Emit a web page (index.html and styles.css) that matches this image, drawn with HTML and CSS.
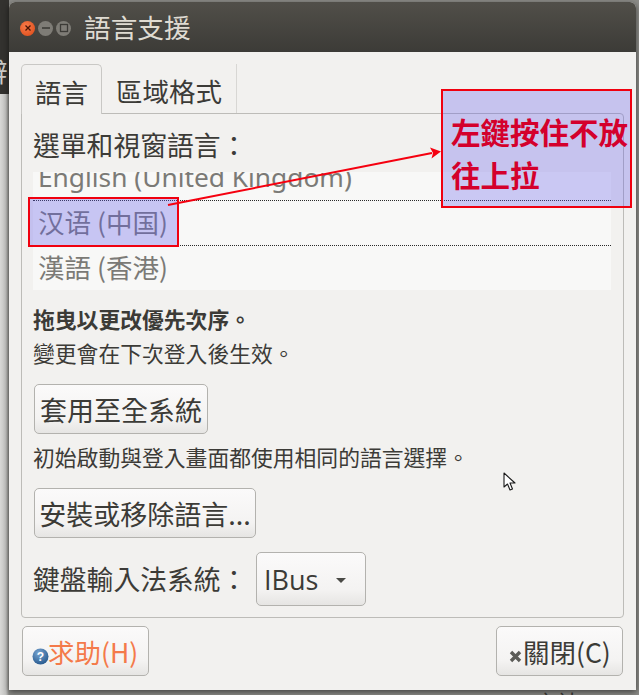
FILE: index.html
```html
<!DOCTYPE html>
<html lang="zh-Hant">
<head>
<meta charset="utf-8">
<title>語言支援</title>
<link rel="stylesheet" href="styles.css">
</head>
<body>
<div class="screen">
  <div class="backdrop-top"></div>
  <div class="backdrop-glyph">辭</div>
  <div class="backdrop-foot">言社</div>
  <div class="window">
    <header class="titlebar">
      <div class="controls">
        <span class="ctl ctl-close"><svg width="8" height="8" viewBox="0 0 8 8"><path d="M1.500 1.500l5 5M6.500 1.500l-5 5" stroke="#4a1505" stroke-width="1.300"/></svg></span>
        <span class="ctl ctl-min"><svg width="10" height="4" viewBox="0 0 10 4"><path d="M1 2h8" stroke="#3c3b37" stroke-width="1.600"/></svg></span>
        <span class="ctl ctl-max"><svg width="10" height="10" viewBox="0 0 10 10"><rect x="1.500" y="1.500" width="7" height="7" fill="none" stroke="#3c3b37" stroke-width="1.300"/></svg></span>
      </div>
      <h1 class="title">語言支援</h1>
    </header>
    <div class="content">
      <div class="tabs">
        <div class="tab tab-active">語言</div>
        <div class="tab">區域格式</div>
      </div>
      <section class="panel">
        <div class="label-main">選單和視窗語言：</div>
        <div class="langlist">
          <div class="lang lang-first"><span class="lang-clip">English (United Kingdom)</span></div>
          <div class="lang">汉语 (中国)</div>
          <div class="lang lang-last">漢語 (香港)</div>
        </div>
        <p class="hint-bold">拖曳以更改優先次序。</p>
        <p class="hint">變更會在下次登入後生效。</p>
        <button class="btn btn-apply">套用至全系統</button>
        <p class="hint hint-login">初始啟動與登入畫面都使用相同的語言選擇。</p>
        <button class="btn btn-install">安裝或移除語言...</button>
        <div class="imerow">
          <span class="label-ime">鍵盤輸入法系統：</span>
          <button class="btn btn-combo">IBus<svg class="caret" width="10" height="5" viewBox="0 0 10 5"><path d="M0 0h10L5 5z" fill="#4a4a46"/></svg></button>
        </div>
      </section>
      <footer class="actions">
        <button class="btn btn-foot btn-help"><svg class="ico-help" width="17" height="17" viewBox="0 0 17 17"><defs><radialGradient id="hg" cx="0.4" cy="0.3" r="0.8"><stop offset="0" stop-color="#7aa6d2"/><stop offset="1" stop-color="#1f5288"/></radialGradient></defs><circle cx="8.500" cy="8.500" r="8" fill="url(#hg)"/><text x="8.500" y="13" text-anchor="middle" class="ico-q">?</text></svg><span>求助(H)</span></button>
        <button class="btn btn-foot btn-close"><svg class="ico-x" width="13" height="13" viewBox="0 0 13 13"><path d="M2 2l9 9M11 2l-9 9" stroke="#5c5c58" stroke-width="3.400"/></svg><span>關閉(C)</span></button>
      </footer>
    </div>
  </div>
  <div class="mark mark-row"></div>
  <div class="mark mark-note">左鍵按住不放<br>往上拉</div>
  <svg class="arrow" width="639" height="695" viewBox="0 0 639 695">
    <path d="M168 205L432 153" stroke="#f5000f" stroke-width="2" fill="none"/>
    <path d="M441 151.500L430 147.500L433 153L431.500 158.500z" fill="#f5000f"/>
  </svg>
  <svg class="cursor" width="14" height="20" viewBox="0 0 14 20"><path d="M1 1v14l3.500-3 2.500 6 2.500-1-2.500-6h5z" fill="#fff" stroke="#1a1a1a" stroke-width="1.100" stroke-linejoin="round"/></svg>
</div>
</body>
</html>
```
FILE: styles.css
```css
* { box-sizing: border-box; }
html, body { margin: 0; padding: 0; background: #8a8a86; }
body { font-family: "Noto Sans CJK TC", "Noto Sans", sans-serif; color: #3c3b37; }
.screen {
  position: relative;
  width: 639px;
  height: 695px;
  overflow: hidden;
  padding: 2px 3px 0 9px;
  background: linear-gradient(90deg, #d8d8d6 0, #c4c4c2 6px, #8c8c88 9px);
}
.backdrop-top { position: absolute; left: 0; top: 0; width: 9px; height: 94px; background: #33322f; }
.backdrop-glyph { position: absolute; left: -18px; top: 56px; font-size: 26px; line-height: 30px; color: #cfcdc8; }
.backdrop-foot { position: absolute; left: 535px; top: 688px; font-size: 22px; line-height: 26px; color: #3c3b37; }
.window {
  position: relative;
  width: 627px;
  height: 688px;
  border-radius: 6px 6px 0 0;
  background: #f2f1ef;
  box-shadow: 0 2px 6px rgba(0,0,0,.55);
  display: flex;
  flex-direction: column;
}
.titlebar {
  height: 50px;
  flex: none;
  display: flex;
  align-items: center;
  padding-left: 11px;
  border-radius: 6px 6px 0 0;
  background: linear-gradient(#514f49, #3c3b37);
}
.controls { display: flex; gap: 3px; margin-top: 2px; }
.ctl { width: 15px; height: 15px; border-radius: 50%; display: flex; align-items: center; justify-content: center; }
.ctl-close { background: radial-gradient(circle at 40% 35%, #f97b4a, #d94714); }
.ctl-min, .ctl-max { background: #7e7c76; }
.title { margin: 0 0 0 13px; font-size: 26.700px; font-weight: 400; line-height: 50px; color: #dfdbd2; }
.content { flex: 1; padding: 12px 12px 14px; display: flex; flex-direction: column; }
.tabs { display: flex; height: 49px; flex: none; position: relative; z-index: 1; }
.tab {
  height: 49px;
  width: 135px;
  padding: 0 0 0 14px;
  font-size: 26.500px;
  line-height: 54px;
  border-right: 1px solid #d8d7d4;
  color: #3c3b37;
}
.tab-active {
  width: 81px;
  padding: 0 0 0 13px;
  height: 50px;
  background: #f2f1ef;
  border: 1px solid #c9c8c5;
  border-bottom: 0;
  border-radius: 5px 5px 0 0;
}
.panel {
  height: 505px;
  flex: none;
  margin-right: 0;
  width: 603px;
  padding: 0 11px;
  border: 1px solid #bdbcb8;
  border-radius: 0 4px 4px 4px;
  display: flex;
  flex-direction: column;
  align-items: flex-start;
}
.label-main { font-size: 26.800px; line-height: 38px; height: 58px; padding-top: 12px; color: #3c3b37; }
.langlist { width: 578px; height: 118px; background: #f8f8f7; color: #7b7a76; font-size: 26.500px; }
.lang { height: 45px; line-height: 42px; padding-left: 5px; border-bottom: 1px dotted #2a2a2a; }
.lang-first { height: 29px; line-height: 15px; overflow: hidden; }
.lang-clip { display: block; margin-top: -2px; font-family: "Noto Sans", sans-serif; font-size: 26.300px; }
.lang-last { border-bottom: 0; }
.hint-bold { margin: 14px 0 0; font-size: 21.800px; font-weight: 700; line-height: 30px; }
.hint { margin: 4px 0 0; font-size: 21.800px; line-height: 30px; }
.hint-login { margin: 8px 0 0; }
.btn {
  font-family: inherit;
  color: #3c3b37;
  font-size: 27px;
  border: 1px solid #b3b2ae;
  border-radius: 5px;
  background: linear-gradient(#fbfafa, #f4f3f2 70%, #e6e5e3);
  padding: 0;
}
.btn-apply { width: 174px; height: 50px; margin: 16px 0 0 1px; }
.btn-install { width: 222px; height: 50px; margin: 16px 0 0 1px; }
.imerow { display: flex; align-items: center; margin-top: 14px; }
.label-ime { font-size: 26.800px; line-height: 54px; width: 223px; }
.btn-combo {
  width: 110px;
  height: 54px;
  display: flex;
  align-items: center;
  justify-content: space-between;
  padding: 0 19px 0 7px;
  font-family: "Open Sans", sans-serif;
}
.caret { margin-top: 2px; }
.actions { display: flex; justify-content: space-between; padding: 8px 1px 0; }
.btn-foot { width: 127px; height: 50px; display: flex; align-items: center; padding-left: 9px; font-size: 26.500px; }
.btn-help { color: #f47a4a; }
.ico-help { margin: 10px -1px 0 0; flex: none; }
.ico-x { margin: 10px 1px 0 3px; flex: none; }
.ico-q { font-family: "Liberation Sans", sans-serif; font-weight: 700; font-size: 12px; fill: #fff; }
.mark { position: absolute; }
.mark-row {
  left: 28px;
  top: 197px;
  width: 151px;
  height: 50px;
  border: 2px solid #f0000f;
  background: rgba(95,90,235,.32);
}
.mark-note {
  left: 441px;
  top: 89px;
  width: 191px;
  height: 119px;
  padding: 19px 0 0 8px;
  border: 2px solid #f0000f;
  background: rgba(95,90,235,.3);
  color: #d4002c;
  font-size: 29.500px;
  font-weight: 700;
  line-height: 43px;
  white-space: nowrap;
}
.arrow { position: absolute; left: 0; top: 0; pointer-events: none; }
.cursor { position: absolute; left: 503px; top: 472px; }
```
